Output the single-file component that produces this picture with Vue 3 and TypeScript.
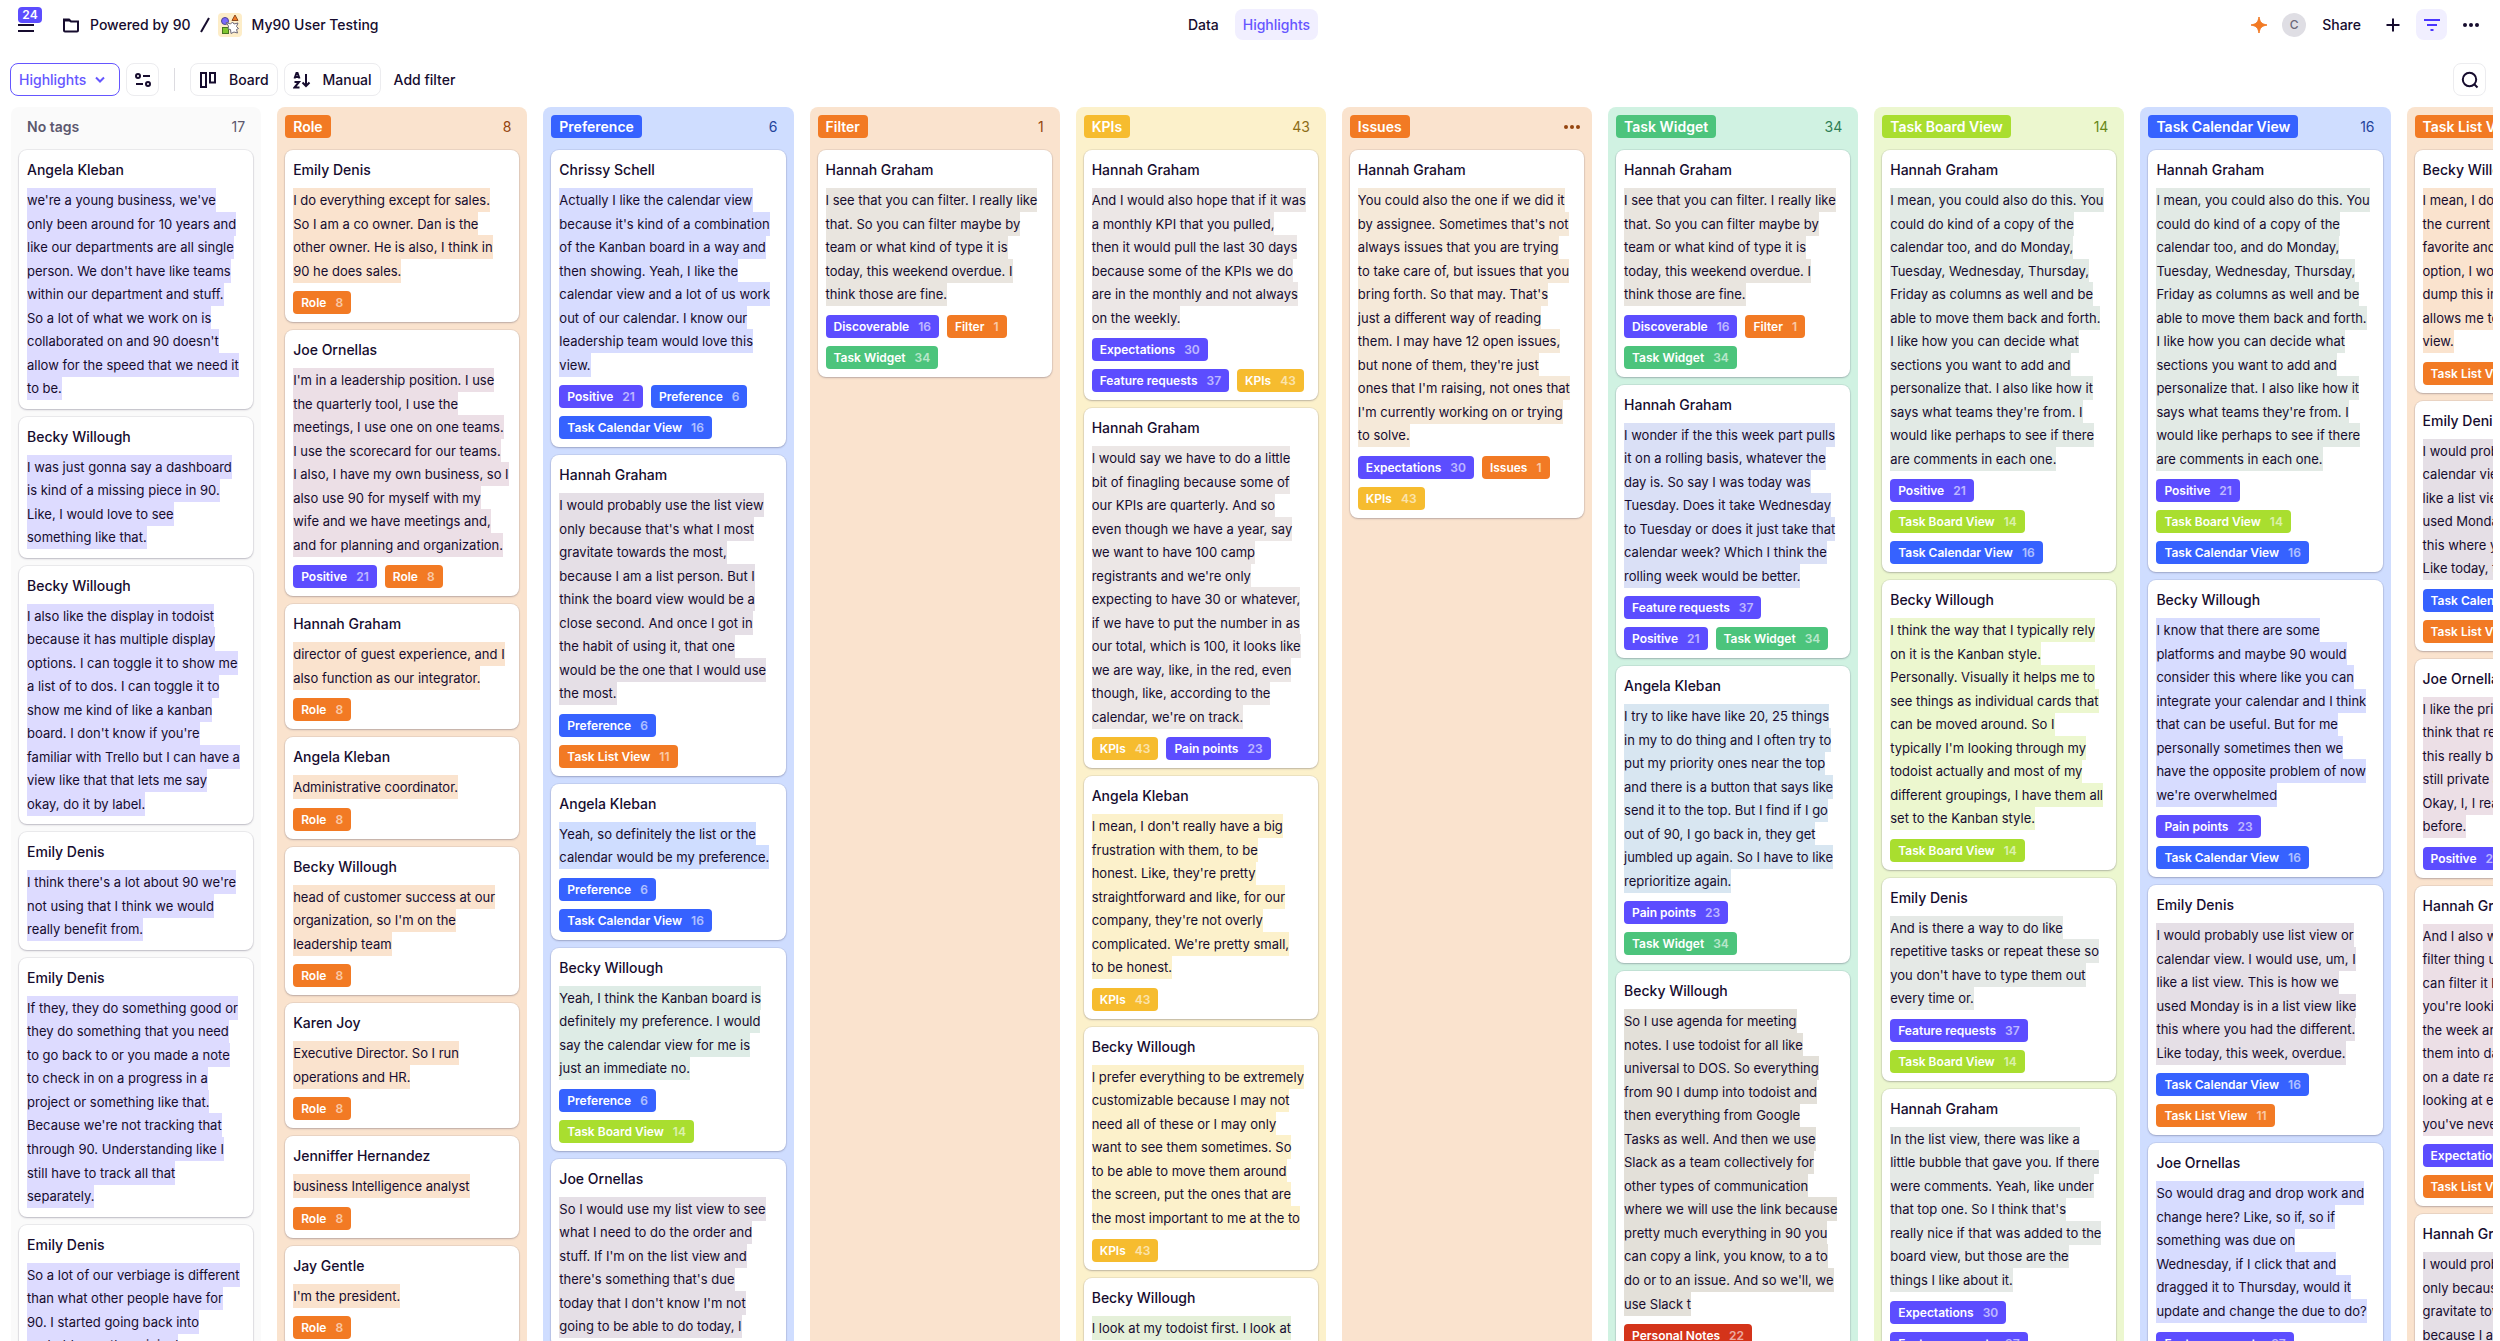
<script setup lang="ts">
type Tone = 'purple' | 'blue' | 'orange' | 'yellow' | 'green' | 'lime' | 'red'

interface Card {
  who: string
  mark: string
  lines: string[]
  tags?: string[]
}

interface Column {
  title: string
  tone: Tone | 'none'
  count?: number
  cards: Card[]
}

const tagInfo: Record<string, { tone: Tone; count: number }> = {
  'Role': { tone: 'orange', count: 8 },
  'Positive': { tone: 'purple', count: 21 },
  'Preference': { tone: 'blue', count: 6 },
  'Task Calendar View': { tone: 'blue', count: 16 },
  'Task Board View': { tone: 'lime', count: 14 },
  'Task List View': { tone: 'orange', count: 11 },
  'Task Widget': { tone: 'green', count: 34 },
  'Discoverable': { tone: 'purple', count: 16 },
  'Filter': { tone: 'orange', count: 1 },
  'Expectations': { tone: 'purple', count: 30 },
  'Feature requests': { tone: 'purple', count: 37 },
  'KPIs': { tone: 'yellow', count: 43 },
  'Pain points': { tone: 'purple', count: 23 },
  'Issues': { tone: 'orange', count: 1 },
  'Personal Notes': { tone: 'red', count: 22 },
}

const filterQuote = [
  'I see that you can filter. I really like',
  'that. So you can filter maybe by',
  'team or what kind of type it is',
  'today, this weekend overdue. I',
  'think those are fine.',
]

const calendarCopyQuote = [
  'I mean, you could also do this. You',
  'could do kind of a copy of the',
  'calendar too, and do Monday,',
  'Tuesday, Wednesday, Thursday,',
  'Friday as columns as well and be',
  'able to move them back and forth.',
  'I like how you can decide what',
  'sections you want to add and',
  'personalize that. I also like how it',
  "says what teams they're from. I",
  'would like perhaps to see if there',
  'are comments in each one.',
]

const listOrCalendarQuote = [
  'I would probably use list view or',
  'calendar view. I would use, um, I',
  'like a list view. This is how we',
  'used Monday is in a list view like',
  'this where you had the different.',
  'Like today, this week, overdue.',
]

const listPersonQuote = [
  'I would probably use the list view',
  "only because that's what I most",
  'gravitate towards the most,',
  'because I am a list person. But I',
  'think the board view would be a',
  'close second. And once I got in',
  'the habit of using it, that one',
  'would be the one that I would use',
  'the most.',
]

const columns: Column[] = [
  {
    title: 'No tags', tone: 'none', count: 17,
    cards: [
      {
        who: 'Angela Kleban', mark: 'purple',
        lines: [
          "we're a young business, we've",
          'only been around for 10 years and',
          'like our departments are all single',
          "person. We don't have like teams",
          'within our department and stuff.',
          'So a lot of what we work on is',
          "collaborated on and 90 doesn't",
          'allow for the speed that we need it',
          'to be.',
        ],
      },
      {
        who: 'Becky Willough', mark: 'purple',
        lines: [
          'I was just gonna say a dashboard',
          'is kind of a missing piece in 90.',
          'Like, I would love to see',
          'something like that.',
        ],
      },
      {
        who: 'Becky Willough', mark: 'purple',
        lines: [
          'I also like the display in todoist',
          'because it has multiple display',
          'options. I can toggle it to show me',
          'a list of to dos. I can toggle it to',
          'show me kind of like a kanban',
          "board. I don't know if you're",
          'familiar with Trello but I can have a',
          'view like that that lets me say',
          'okay, do it by label.',
        ],
      },
      {
        who: 'Emily Denis', mark: 'purple',
        lines: [
          "I think there's a lot about 90 we're",
          'not using that I think we would',
          'really benefit from.',
        ],
      },
      {
        who: 'Emily Denis', mark: 'purple',
        lines: [
          'If they, they do something good or',
          'they do something that you need',
          'to go back to or you made a note',
          'to check in on a progress in a',
          'project or something like that.',
          "Because we're not tracking that",
          'through 90. Understanding like I',
          'still have to track all that',
          'separately.',
        ],
      },
      {
        who: 'Emily Denis', mark: 'purple',
        lines: [
          'So a lot of our verbiage is different',
          'than what other people have for',
          '90. I started going back into',
          'probably say the original',
        ],
      },
    ],
  },
  {
    title: 'Role', tone: 'orange', count: 8,
    cards: [
      {
        who: 'Emily Denis', mark: 'orange', tags: ['Role'],
        lines: [
          'I do everything except for sales.',
          'So I am a co owner. Dan is the',
          'other owner. He is also, I think in',
          '90 he does sales.',
        ],
      },
      {
        who: 'Joe Ornellas', mark: 'rose', tags: ['Positive', 'Role'],
        lines: [
          "I'm in a leadership position. I use",
          'the quarterly tool, I use the',
          'meetings, I use one on one teams.',
          'I use the scorecard for our teams.',
          'I also, I have my own business, so I',
          'also use 90 for myself with my',
          'wife and we have meetings and,',
          'and for planning and organization.',
        ],
      },
      {
        who: 'Hannah Graham', mark: 'orange', tags: ['Role'],
        lines: ['director of guest experience, and I', 'also function as our integrator.'],
      },
      { who: 'Angela Kleban', mark: 'orange', tags: ['Role'], lines: ['Administrative coordinator.'] },
      {
        who: 'Becky Willough', mark: 'orange', tags: ['Role'],
        lines: ['head of customer success at our', "organization, so I'm on the", 'leadership team'],
      },
      {
        who: 'Karen Joy', mark: 'orange', tags: ['Role'],
        lines: ['Executive Director. So I run', 'operations and HR.'],
      },
      { who: 'Jenniffer Hernandez', mark: 'orange', tags: ['Role'], lines: ['business Intelligence analyst'] },
      { who: 'Jay Gentle', mark: 'orange', tags: ['Role'], lines: ["I'm the president."] },
    ],
  },
  {
    title: 'Preference', tone: 'blue', count: 6,
    cards: [
      {
        who: 'Chrissy Schell', mark: 'iris', tags: ['Positive', 'Preference', 'Task Calendar View'],
        lines: [
          'Actually I like the calendar view',
          "because it's kind of a combination",
          'of the Kanban board in a way and',
          'then showing. Yeah, I like the',
          'calendar view and a lot of us work',
          'out of our calendar. I know our',
          'leadership team would love this',
          'view.',
        ],
      },
      { who: 'Hannah Graham', mark: 'mauve', tags: ['Preference', 'Task List View'], lines: listPersonQuote },
      {
        who: 'Angela Kleban', mark: 'blue', tags: ['Preference', 'Task Calendar View'],
        lines: ['Yeah, so definitely the list or the', 'calendar would be my preference.'],
      },
      {
        who: 'Becky Willough', mark: 'mint', tags: ['Preference', 'Task Board View'],
        lines: [
          'Yeah, I think the Kanban board is',
          'definitely my preference. I would',
          'say the calendar view for me is',
          'just an immediate no.',
        ],
      },
      {
        who: 'Joe Ornellas', mark: 'mauve',
        lines: [
          'So I would use my list view to see',
          'what I need to do the order and',
          "stuff. If I'm on the list view and",
          "there's something that's due",
          "today that I don't know I'm not",
          'going to be able to do today, I',
        ],
      },
    ],
  },
  {
    title: 'Filter', tone: 'orange', count: 1,
    cards: [
      { who: 'Hannah Graham', mark: 'stone', tags: ['Discoverable', 'Filter', 'Task Widget'], lines: filterQuote },
    ],
  },
  {
    title: 'KPIs', tone: 'yellow', count: 43,
    cards: [
      {
        who: 'Hannah Graham', mark: 'ash', tags: ['Expectations', 'Feature requests', 'KPIs'],
        lines: [
          'And I would also hope that if it was',
          'a monthly KPI that you pulled,',
          'then it would pull the last 30 days',
          'because some of the KPIs we do',
          'are in the monthly and not always',
          'on the weekly.',
        ],
      },
      {
        who: 'Hannah Graham', mark: 'ash', tags: ['KPIs', 'Pain points'],
        lines: [
          'I would say we have to do a little',
          'bit of finagling because some of',
          'our KPIs are quarterly. And so',
          'even though we have a year, say',
          'we want to have 100 camp',
          "registrants and we're only",
          'expecting to have 30 or whatever,',
          'if we have to put the number in as',
          'our total, which is 100, it looks like',
          'we are way, like, in the red, even',
          'though, like, according to the',
          "calendar, we're on track.",
        ],
      },
      {
        who: 'Angela Kleban', mark: 'yellow', tags: ['KPIs'],
        lines: [
          "I mean, I don't really have a big",
          'frustration with them, to be',
          "honest. Like, they're pretty",
          'straightforward and like, for our',
          "company, they're not overly",
          "complicated. We're pretty small,",
          'to be honest.',
        ],
      },
      {
        who: 'Becky Willough', mark: 'yellow', tags: ['KPIs'],
        lines: [
          'I prefer everything to be extremely',
          'customizable because I may not',
          'need all of these or I may only',
          'want to see them sometimes. So',
          'to be able to move them around',
          'the screen, put the ones that are',
          'the most important to me at the to',
        ],
      },
      { who: 'Becky Willough', mark: 'sage', lines: ['I look at my todoist first. I look at'] },
    ],
  },
  {
    title: 'Issues', tone: 'orange',
    cards: [
      {
        who: 'Hannah Graham', mark: 'sand', tags: ['Expectations', 'Issues', 'KPIs'],
        lines: [
          'You could also the one if we did it',
          "by assignee. Sometimes that's not",
          'always issues that you are trying',
          'to take care of, but issues that you',
          "bring forth. So that may. That's",
          'just a different way of reading',
          'them. I may have 12 open issues,',
          "but none of them, they're just",
          "ones that I'm raising, not ones that",
          "I'm currently working on or trying",
          'to solve.',
        ],
      },
    ],
  },
  {
    title: 'Task Widget', tone: 'green', count: 34,
    cards: [
      { who: 'Hannah Graham', mark: 'stone', tags: ['Discoverable', 'Filter', 'Task Widget'], lines: filterQuote },
      {
        who: 'Hannah Graham', mark: 'haze', tags: ['Feature requests', 'Positive', 'Task Widget'],
        lines: [
          'I wonder if the this week part pulls',
          'it on a rolling basis, whatever the',
          'day is. So say I was today was',
          'Tuesday. Does it take Wednesday',
          'to Tuesday or does it just take that',
          'calendar week? Which I think the',
          'rolling week would be better.',
        ],
      },
      {
        who: 'Angela Kleban', mark: 'sky', tags: ['Pain points', 'Task Widget'],
        lines: [
          'I try to like have like 20, 25 things',
          'in my to do thing and I often try to',
          'put my priority ones near the top',
          'and there is a button that says like',
          'send it to the top. But I find if I go',
          'out of 90, I go back in, they get',
          'jumbled up again. So I have to like',
          'reprioritize again.',
        ],
      },
      {
        who: 'Becky Willough', mark: 'taupe', tags: ['Personal Notes'],
        lines: [
          'So I use agenda for meeting',
          'notes. I use todoist for all like',
          'universal to DOS. So everything',
          'from 90 I dump into todoist and',
          'then everything from Google',
          'Tasks as well. And then we use',
          'Slack as a team collectively for',
          'other types of communication',
          'where we will use the link because',
          'pretty much everything in 90 you',
          'can copy a link, you know, to a to',
          "do or to an issue. And so we'll, we",
          'use Slack t',
        ],
      },
    ],
  },
  {
    title: 'Task Board View', tone: 'lime', count: 14,
    cards: [
      {
        who: 'Hannah Graham', mark: 'fog', lines: calendarCopyQuote,
        tags: ['Positive', 'Task Board View', 'Task Calendar View'],
      },
      {
        who: 'Becky Willough', mark: 'lime', tags: ['Task Board View'],
        lines: [
          'I think the way that I typically rely',
          'on it is the Kanban style.',
          'Personally. Visually it helps me to',
          'see things as individual cards that',
          'can be moved around. So I',
          "typically I'm looking through my",
          'todoist actually and most of my',
          'different groupings, I have them all',
          'set to the Kanban style.',
        ],
      },
      {
        who: 'Emily Denis', mark: 'mist', tags: ['Feature requests', 'Task Board View'],
        lines: [
          'And is there a way to do like',
          'repetitive tasks or repeat these so',
          "you don't have to type them out",
          'every time or.',
        ],
      },
      {
        who: 'Hannah Graham', mark: 'mist', tags: ['Expectations', 'Feature requests'],
        lines: [
          'In the list view, there was like a',
          'little bubble that gave you. If there',
          'were comments. Yeah, like under',
          "that top one. So I think that's",
          'really nice if that was added to the',
          'board view, but those are the',
          'things I like about it.',
        ],
      },
    ],
  },
  {
    title: 'Task Calendar View', tone: 'blue', count: 16,
    cards: [
      {
        who: 'Hannah Graham', mark: 'fog', lines: calendarCopyQuote,
        tags: ['Positive', 'Task Board View', 'Task Calendar View'],
      },
      {
        who: 'Becky Willough', mark: 'iris', tags: ['Pain points', 'Task Calendar View'],
        lines: [
          'I know that there are some',
          'platforms and maybe 90 would',
          'consider this where like you can',
          'integrate your calendar and I think',
          'that can be useful. But for me',
          'personally sometimes then we',
          'have the opposite problem of now',
          "we're overwhelmed",
        ],
      },
      { who: 'Emily Denis', mark: 'mauve', tags: ['Task Calendar View', 'Task List View'], lines: listOrCalendarQuote },
      {
        who: 'Joe Ornellas', mark: 'iris', tags: ['Feature requests'],
        lines: [
          'So would drag and drop work and',
          'change here? Like, so if, so if',
          'something was due on',
          'Wednesday, if I click that and',
          'dragged it to Thursday, would it',
          'update and change the due to do?',
        ],
      },
    ],
  },
  {
    title: 'Task List View', tone: 'orange', count: 11,
    cards: [
      {
        who: 'Becky Willough', mark: 'orange', tags: ['Task List View'],
        lines: [
          'I mean, I do like',
          'the current one',
          'favorite and my',
          'option, I would',
          'dump this into',
          'allows me to list',
          'view.',
        ],
      },
      { who: 'Emily Denis', mark: 'mauve', tags: ['Task Calendar View', 'Task List View'], lines: listOrCalendarQuote },
      {
        who: 'Joe Ornellas', mark: 'rose', tags: ['Positive'],
        lines: [
          'I like the private',
          'think that really',
          'this really best',
          'still private and',
          'Okay, I, I really',
          'before.',
        ],
      },
      {
        who: 'Hannah Graham', mark: 'rose', tags: ['Expectations', 'Task List View'],
        lines: [
          'And I also would',
          'filter thing up',
          'can filter it by',
          "you're looking at",
          'the week and',
          'them into dates',
          'on a date range',
          'looking at each',
          "you've never",
        ],
      },
      { who: 'Hannah Graham', mark: 'mauve', lines: listPersonQuote.slice(0, 5) },
    ],
  },
]
</script>

<template>
  <div class="app">
    <header class="topbar">
      <div class="crumbs">
        <button class="menu" type="button" aria-label="Menu, 24 updates">
          <svg width="18" height="18" viewBox="0 0 18 18"><path d="M1 2.500h16M1 9h16M1 15h16" /></svg>
          <span class="badge">24</span>
        </button>
        <a class="crumb" href="#">
          <svg class="folder" width="18" height="16" viewBox="0 0 18 16"><path d="M2 12.500V2.500h5l2 2h7v9a1 1 0 0 1-1 1H3a1 1 0 0 1-1-1z" /><path d="M2 3.500h6" /></svg>
          Powered by 90
        </a>
        <svg class="slash" width="12" height="18" viewBox="0 0 12 18"><path d="M10 2 2 16" /></svg>
        <a class="crumb project" href="#">
          <svg width="24" height="24" viewBox="0 0 24 24">
            <rect class="tile" width="24" height="24" rx="4" />
            <path d="M17 2l3 5.500h-6z" fill="#f27a24" stroke="#8a4a20" />
            <circle cx="7" cy="8" r="3.500" fill="#7a68ff" stroke="#4e4490" />
            <rect x="4.500" y="14.500" width="6" height="6" fill="#7fc52e" stroke="#46751f" />
            <path d="M8 9.500l4.500 1.500 2-2 1.500 2 4-1-1.500 3.500 2 2-2 1 1 3.500-3.500-1-3 1.500-.5-4-2.500-.5.500-3z" fill="#fff" stroke="#6c6878" />
          </svg>
          My90 User Testing
        </a>
      </div>
      <nav class="tabs">
        <a class="tab" href="#">Data</a>
        <a class="tab active" href="#">Highlights</a>
      </nav>
      <div class="actions">
        <svg class="spark" width="18" height="18" viewBox="0 0 18 18"><path d="M9 1c.9 5 2.500 7 8 8-5.500 1-7.100 3-8 8-.9-5-2.500-7-8-8 5.500-1 7.100-3 8-8z" /></svg>
        <span class="avatar">C</span>
        <button class="share" type="button">Share</button>
        <button class="icon-btn plus" type="button" aria-label="Add">
          <svg width="16" height="16" viewBox="0 0 16 16"><path d="M8 1.500v13M1.500 8h13" /></svg>
        </button>
        <button class="icon-btn filter" type="button" aria-label="Filter">
          <svg width="18" height="14" viewBox="0 0 18 14"><path d="M1 2h16M4 7h10M7.500 12h3" /></svg>
        </button>
        <button class="icon-btn" type="button" aria-label="More">
          <svg class="dots" width="18" height="6" viewBox="0 0 18 6"><circle cx="3" cy="3" r="2" /><circle cx="9" cy="3" r="2" /><circle cx="15" cy="3" r="2" /></svg>
        </button>
      </div>
    </header>

    <div class="toolbar">
      <button class="tool kind" type="button">
        Highlights
        <svg width="12" height="8" viewBox="0 0 12 8"><path d="M2 1.500l4 4 4-4" /></svg>
      </button>
      <button class="tool square" type="button" aria-label="Display options">
        <svg width="18" height="14" viewBox="0 0 18 14"><circle cx="4" cy="3" r="2" /><path d="M9 3h7M2 11h7" /><circle cx="14" cy="11" r="2" /></svg>
      </button>
      <span class="divider"></span>
      <button class="tool board-btn" type="button">
        <svg width="18" height="18" viewBox="0 0 18 18"><path d="M2 2h5v14H2zM11 2h5v9.500h-5z" /></svg>
        Board
      </button>
      <button class="tool manual-btn" type="button">
        <svg width="18" height="18" viewBox="0 0 18 18"><path d="M1.500 7.500 3.500 2h1l2 5.500M2.200 6h3.600M1.500 11h4.500l-4.500 5.500h5M13 3v12M9.500 11.500 13 15l3.500-3.500" /></svg>
        Manual
      </button>
      <button class="tool plain" type="button">Add filter</button>
      <button class="tool square search" type="button" aria-label="Search">
        <svg width="18" height="18" viewBox="0 0 18 18"><circle cx="8.500" cy="8.500" r="6.700" /><path d="M13.500 13.500 16.500 16.500" /></svg>
      </button>
    </div>

    <main class="board">
      <section v-for="col in columns" :key="col.title" class="column" :class="'col-' + col.tone">
        <header class="col-head">
          <h2 class="col-title" :class="'tag-' + col.tone">{{ col.title }}</h2>
          <span v-if="col.count" class="col-count">{{ col.count }}</span>
          <button v-else class="col-more" type="button" aria-label="Column options">
            <svg class="dots" width="18" height="6" viewBox="0 0 18 6"><circle cx="3" cy="3" r="2" /><circle cx="9" cy="3" r="2" /><circle cx="15" cy="3" r="2" /></svg>
          </button>
        </header>
        <article v-for="(card, i) in col.cards" :key="i" class="card">
          <h3 class="who">{{ card.who }}</h3>
          <p class="quote"><mark :class="'mark-' + card.mark">{{ card.lines.join('\n') }}</mark></p>
          <div v-if="card.tags" class="tags">
            <span v-for="tag in card.tags" :key="tag" class="tag" :class="'tag-' + tagInfo[tag].tone">
              {{ tag }}<span class="tag-count">{{ tagInfo[tag].count }}</span>
            </span>
          </div>
        </article>
      </section>
    </main>
  </div>
</template>

<style>
body {
  margin: 0;
  background: #fff;
}
</style>

<style scoped>
.app {
  display: flex;
  flex-direction: column;
  height: 100vh;
  overflow: hidden;
  font-family: Inter, "Liberation Sans", sans-serif;
  font-size: 14px;
  color: #160c2e;
}

.app * {
  box-sizing: border-box;
}

button {
  padding: 0;
  border: 0;
  background: none;
  font: inherit;
  color: inherit;
}

a {
  color: inherit;
  text-decoration: none;
}

svg {
  flex: none;
  display: block;
  fill: none;
  stroke: currentColor;
  stroke-width: 2;
}

.topbar {
  flex: none;
  display: grid;
  grid-template-columns: 1fr auto 1fr;
  align-items: center;
  height: 49px;
  padding: 0 14px 0 12px;
  font-weight: 500;
}

.crumbs {
  display: flex;
  align-items: center;
  padding-left: 5px;
}

.menu {
  position: relative;
  margin-right: 27px;
}

.badge {
  position: absolute;
  left: 1px;
  top: -9px;
  width: 24px;
  height: 16px;
  border-radius: 4px;
  background: #5c4dff;
  color: #fff;
  font-size: 12px;
  font-weight: 600;
  line-height: 16px;
  text-align: center;
}

.crumb {
  display: flex;
  align-items: center;
  gap: 10px;
}

.slash {
  margin: 0 7px 0 8px;
}

.project svg {
  stroke-width: 1;
}

.tile {
  fill: #fdedc8;
  stroke: none;
}

.tabs {
  display: flex;
  gap: 8px;
}

.tab {
  padding: 0 8px;
  border-radius: 8px;
  line-height: 31px;
}

.tab.active {
  background: #f1efff;
  color: #6556ff;
}

.actions {
  display: flex;
  align-items: center;
  justify-content: flex-end;
}

.spark {
  fill: #f27a24;
  stroke: #f27a24;
  stroke-width: 1;
  stroke-linejoin: round;
}

.avatar {
  width: 24px;
  height: 24px;
  margin: 0 16px 0 14px;
  border-radius: 50%;
  background: #dfdee4;
  color: #6c6878;
  font-size: 12px;
  line-height: 24px;
  text-align: center;
}

.icon-btn {
  display: flex;
  align-items: center;
  justify-content: center;
  width: 31px;
  height: 31px;
  border-radius: 8px;
}

.plus {
  margin: 0 8px 0 16px;
}

.filter {
  margin-right: 8px;
  background: #f1efff;
  color: #4a35ff;
}

.dots {
  fill: currentColor;
  stroke: none;
}

.toolbar {
  flex: none;
  display: flex;
  align-items: center;
  padding: 14px 14px 11px 10px;
  font-weight: 500;
}

.tool {
  display: flex;
  align-items: center;
  justify-content: center;
  gap: 12px;
  height: 33px;
  padding: 0 8px;
  border: 1px solid #ececef;
  border-radius: 8px;
}

.kind {
  justify-content: flex-start;
  gap: 8px;
  width: 110px;
  margin-right: 6px;
  border-color: #6556ff;
  color: #6556ff;
}

.square {
  width: 33px;
  padding: 0;
}

.divider {
  width: 1px;
  height: 23px;
  margin: 0 15px;
  background: #dcdbe0;
}

.board-btn {
  margin-right: 6px;
}

.manual-btn {
  margin-right: 4px;
}

.plain {
  border-color: transparent;
}

.search {
  margin-left: auto;
}

.board {
  flex: 1;
  min-height: 0;
  display: flex;
  gap: 16px;
  margin: 0 7px 0 11px;
  overflow: hidden;
}

.column {
  flex: 0 0 max(250px, 10.08%);
  min-width: 0;
  display: flex;
  flex-direction: column;
  gap: 8px;
  padding: 8px 8px 0;
  border-radius: 8px 8px 0 0;
}

.col-none { background: #fafafa; color: #5c586e; }
.col-orange { background: #fae3ce; color: #94450f; }
.col-blue { background: #cfddff; color: #24439b; }
.col-yellow { background: #fcf1cb; color: #8c6c17; }
.col-green { background: #d0f2e2; color: #2f7e54; }
.col-lime { background: #ecf7cf; color: #678718; }

.col-head {
  flex: none;
  display: flex;
  align-items: center;
  justify-content: space-between;
  height: 23px;
  margin-bottom: 4px;
  padding-right: 8px;
}

.col-title {
  margin: 0;
  padding: 0 8px;
  border-radius: 4px;
  font-size: 14px;
  font-weight: 600;
  line-height: 23px;
  color: #fff;
  white-space: nowrap;
}

.col-title.tag-none { color: #5c586e; }
.tag-purple { background: #5c4dff; }
.tag-blue { background: #3662ff; }
.tag-orange { background: #f27a24; }
.tag-yellow { background: #f6bc2f; }
.tag-green { background: #4cc47c; }
.tag-lime { background: #a9de2f; }
.tag-red { background: #d4341a; }

.col-more {
  margin-right: -5px;
}

.card {
  flex: none;
  padding: 8px;
  border-radius: 8px;
  background: #fff;
  color: #160c2e;
  box-shadow: 0 0 0 1px rgba(22, 12, 46, 0.06), 0 1px 2px rgba(22, 12, 46, 0.22);
}

.who {
  margin: 0 0 8px;
  font-size: 14px;
  font-weight: 500;
  line-height: 23px;
}

.quote {
  margin: 0;
  font-size: 13px;
  line-height: 1.81;
  white-space: pre;
}

.quote mark {
  padding: 4px 0;
  color: inherit;
}

.mark-purple { background: #dddbff; }
.mark-blue { background: #cfddff; }
.mark-orange { background: #fae3ce; }
.mark-yellow { background: #fcf1cb; }
.mark-lime { background: #ecf7cf; }
.mark-rose { background: #ecdfe6; }
.mark-iris { background: #d7dcff; }
.mark-mauve { background: #e5dfe6; }
.mark-mint { background: #deece6; }
.mark-stone { background: #e9e5df; }
.mark-ash { background: #ece7e6; }
.mark-sage { background: #e5f0d9; }
.mark-sand { background: #f5e9d9; }
.mark-haze { background: #dae0f6; }
.mark-sky { background: #d8e6f1; }
.mark-taupe { background: #e3e0d9; }
.mark-fog { background: #e2eae5; }
.mark-mist { background: #e5e9e6; }

.tags {
  display: flex;
  flex-wrap: wrap;
  gap: 8px;
  margin-top: 8px;
}

.tag {
  padding: 0 8px;
  border-radius: 4px;
  color: #fff;
  font-size: 12px;
  font-weight: 600;
  line-height: 23px;
  white-space: nowrap;
}

.tag-count {
  margin-left: 9px;
  opacity: 0.6;
}
</style>
